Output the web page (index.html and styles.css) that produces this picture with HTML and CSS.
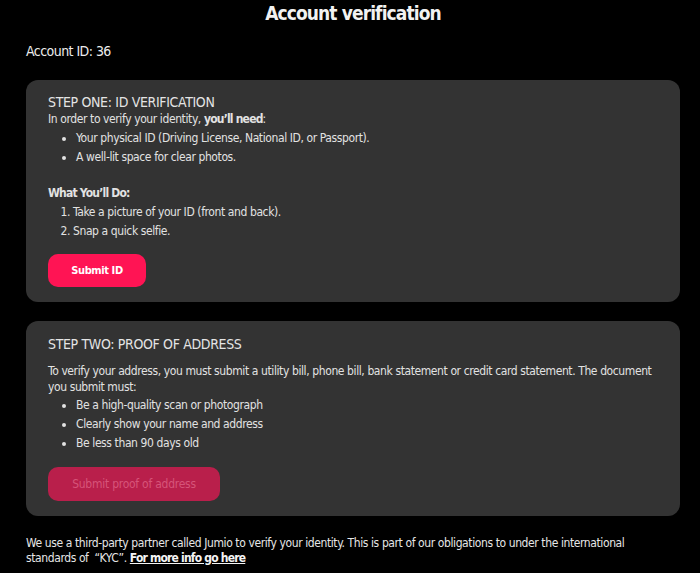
FILE: index.html
```html
<!DOCTYPE html>
<html lang="en">
<head>
<meta charset="utf-8">
<title>Account verification</title>
<link rel="stylesheet" href="styles.css">
</head>
<body>
<main class="page">
  <h1 class="title">Account verification</h1>
  <p class="account-id">Account ID: 36</p>

  <section class="card">
    <h2 class="card-title">STEP ONE: ID VERIFICATION</h2>
    <p class="intro">In order to verify your identity, <strong>you’ll need</strong>:</p>
    <ul class="list">
      <li>Your physical ID (Driving License, National ID, or Passport).</li>
      <li>A well-lit space for clear photos.</li>
    </ul>
    <p class="subhead"><strong>What You’ll Do:</strong></p>
    <ol class="list numbered">
      <li>Take a picture of your ID (front and back).</li>
      <li>Snap a quick selfie.</li>
    </ol>
    <button class="btn btn-id" type="button">Submit ID</button>
  </section>

  <section class="card card-two">
    <h2 class="card-title">STEP TWO: PROOF OF ADDRESS</h2>
    <p class="para">To verify your address, you must submit a utility bill, phone bill, bank statement or credit card statement. The document you submit must:</p>
    <ul class="list list-two">
      <li>Be a high-quality scan or photograph</li>
      <li>Clearly show your name and address</li>
      <li>Be less than 90 days old</li>
    </ul>
    <button class="btn btn-disabled" type="button" disabled>Submit proof of address</button>
  </section>

  <p class="footer">We use a third-party partner called Jumio to verify your identity. This is part of our obligations to under the international standards of &nbsp;“KYC”. <a href="#" class="more">For more info go here</a></p>
</main>
</body>
</html>
```

FILE: styles.css
```css
html, body {
  margin: 0;
  padding: 0;
  background: #000;
}

body {
  color: #e2e2e2;
  font-family: "DejaVu Sans Condensed", "DejaVu Sans", sans-serif;
  font-size: 12px;
  letter-spacing: -0.4px;
}

strong {
  letter-spacing: -0.8px;
}

.page {
  padding: 0 20px 0 26px;
}

.title {
  margin: 0;
  text-align: center;
  font-size: 19px;
  line-height: 26px;
  font-weight: bold;
  letter-spacing: -0.9px;
  color: #f2f2f2;
}

.account-id {
  margin: 16px 0 0;
  font-size: 14px;
  line-height: 18px;
  letter-spacing: -0.55px;
  color: #ececec;
}

.card {
  margin-top: 20px;
  background: #333333;
  border-radius: 12px;
  padding: 13px 22px 15px;
}

.card-two {
  margin-top: 19px;
  padding-top: 14px;
}

.card-title {
  margin: 0;
  font-size: 14px;
  line-height: 18px;
  font-weight: normal;
  letter-spacing: -0.35px;
  color: #e4e4e4;
}

.intro,
.subhead,
.para {
  margin: 0;
  line-height: 16px;
}

.list {
  margin: 2px 0 0;
  padding-left: 28px;
  line-height: 19px;
}

.subhead {
  margin-top: 18px;
}

.numbered {
  padding-left: 25px;
}

.para {
  margin-top: 10px;
}

.list-two {
  margin-top: 1px;
}

.btn {
  display: block;
  margin-top: 13px;
  border: 0;
  border-radius: 10px;
  font-family: inherit;
  font-weight: bold;
  padding: 0;
}

.btn-id {
  width: 98px;
  height: 33px;
  background: #ff1454;
  color: #fff;
  font-size: 11px;
  letter-spacing: -0.4px;
}

.btn-disabled {
  margin-top: 14px;
  width: 172px;
  height: 34px;
  background: #b91f4b;
  color: #d65479;
  font-weight: normal;
  font-size: 12px;
  letter-spacing: -0.25px;
}

.footer {
  margin: 20px 0 0;
  padding-right: 40px;
  line-height: 15px;
  color: #e6e6e6;
}

.more {
  color: #f4f4f4;
  font-weight: bold;
  letter-spacing: -0.8px;
  text-decoration: underline;
}
```
